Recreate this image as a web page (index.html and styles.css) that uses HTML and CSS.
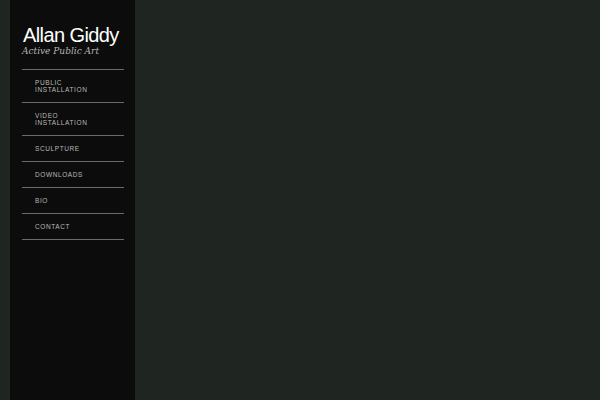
FILE: index.html
```html
<!DOCTYPE html>
<html>
<head>
<meta charset="utf-8">
<title>Allan Giddy</title>
<link rel="stylesheet" href="styles.css">
</head>
<body>
<aside class="sidebar">
  <h1 class="title">Allan Giddy</h1>
  <p class="subtitle">Active Public Art</p>
  <ul class="nav">
    <li><a href="#">Public<br>Installation</a></li>
    <li><a href="#">Video<br>Installation</a></li>
    <li><a href="#">Sculpture</a></li>
    <li><a href="#">Downloads</a></li>
    <li><a href="#">Bio</a></li>
    <li><a href="#">Contact</a></li>
  </ul>
</aside>
<main class="content"></main>
</body>
</html>
```
FILE: styles.css
```css
html, body {
  margin: 0;
  padding: 0;
  height: 100%;
}
body {
  background: #1f2621;
  display: flex;
  padding-left: 10px;
  box-sizing: border-box;
  font-family: "Liberation Sans", Arial, sans-serif;
}
.sidebar {
  width: 125px;
  min-height: 400px;
  background: #0b0c0b;
  padding: 25px 11px 0 12px;
  box-sizing: border-box;
  flex-shrink: 0;
}
.title {
  margin: 0 0 0 1px;
  font-weight: normal;
  font-size: 20px;
  line-height: 20px;
  color: #ffffff;
  letter-spacing: -0.6px;
  white-space: nowrap;
}
.subtitle {
  margin: 0;
  font-family: "DejaVu Serif", Georgia, serif;
  font-style: italic;
  font-size: 9px;
  line-height: 12px;
  color: #b5b5b5;
  white-space: nowrap;
}
.nav {
  list-style: none;
  margin: 12px 0 0 0;
  padding: 0;
  border-top: 1px solid #6a6a6a;
}
.nav li {
  border-bottom: 1px solid #6a6a6a;
}
.nav a {
  display: block;
  padding: 9px 0 9px 13px;
  font-size: 6.5px;
  line-height: 7px;
  letter-spacing: 0.6px;
  text-transform: uppercase;
  text-decoration: none;
  color: #b8b8b8;
}
.content {
  flex: 1;
}
```
